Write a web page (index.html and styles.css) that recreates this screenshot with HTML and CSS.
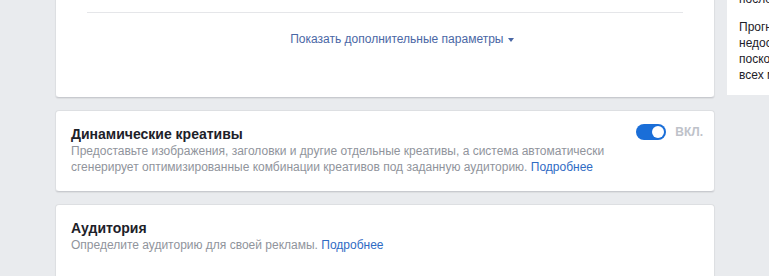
FILE: index.html
```html
<!DOCTYPE html>
<html lang="ru">

<head>
    <meta charset="utf-8">
    <meta name="viewport" content="width=device-width, initial-scale=1.0">
    <title>Настройки рекламы</title>
    <link rel="stylesheet" href="styles.css">
</head>

<body>
    <div class="page">
        <div class="main">
            <!-- блок с дополнительными параметрами -->
            <div class="card card-more">
                <div class="divider"></div>
                <a class="more-link" href="#">Показать дополнительные параметры <span class="caret"></span></a>
            </div>

            <div class="card">
                <div class="card-head">
                    <h2 class="card-title">Динамические креативы</h2>
                    <div class="switch-wrap">
                        <span class="switch"><span class="knob"></span></span>
                        <span class="switch-label">ВКЛ.</span>
                    </div>
                </div>
                <p class="card-text">Предоставьте изображения, заголовки и другие отдельные креативы, а система автоматически
                    сгенерирует оптимизированные комбинации креативов под заданную аудиторию. <a href="#">Подробнее</a></p>
            </div>

            <div class="card card-last">
                <h2 class="card-title">Аудитория</h2>
                <p class="card-text">Определите аудиторию для своей рекламы. <a href="#">Подробнее</a></p>
            </div>
        </div>

        <div class="side">
            <p>последних 7 дней.</p>
            <p>Прогнозы<br>недоступны,<br>поскольку для<br>всех мест размещения.</p>
        </div>
    </div>
</body>

</html>
```

FILE: styles.css
```css
/* фон страницы */
body {
    margin: 0;
    background-color: #e9ebee;
    font-family: "Liberation Sans", Arial, sans-serif;
    color: #1d2129;
    overflow: hidden;
}

.page {
    display: flex;
    align-items: flex-start;
    gap: 12px;
    padding-left: 55px;
    margin-top: -13px;
}

.main {
    width: 660px;
    flex-shrink: 0;
    display: flex;
    flex-direction: column;
    gap: 12px;
}

/* карточки */
.card {
    background: #fff;
    border: 1px solid #dddfe2;
    border-bottom-color: #c8cacf;
    border-radius: 4px;
    box-shadow: 0 1px 1px rgba(0, 0, 0, 0.06);
    padding: 14px 11px 16px 15px;
}

.card-more {
    padding: 24px 31px 50px 31px;
    text-align: center;
}

.divider {
    height: 1px;
    background: #e5e6e9;
    margin-bottom: 16px;
}

.more-link {
    display: inline-block;
    margin-left: 34px;
    color: #4a67a5;
    font-size: 12px;
    line-height: 16px;
    text-decoration: none;
}

.caret {
    display: inline-block;
    width: 0;
    height: 0;
    border-left: 3.5px solid transparent;
    border-right: 3.5px solid transparent;
    border-top: 4px solid #4a67a5;
    vertical-align: middle;
    margin-left: 1px;
}

.card-head {
    display: flex;
    justify-content: space-between;
    align-items: center;
}

.card-title {
    margin: 0;
    font-size: 14px;
    line-height: 18px;
    font-weight: bold;
    color: #1d2129;
}

.card-text {
    margin: 0;
    max-width: 550px;
    font-size: 12px;
    line-height: 16px;
    color: #90949c;
}

.card-text a {
    color: #2f6bc4;
    text-decoration: none;
}

.card-last {
    padding-top: 14px;
    height: 60px;
}

/* переключатель */
.switch-wrap {
    display: flex;
    align-items: center;
    gap: 9px;
    margin-top: -4px;
}

.switch {
    position: relative;
    display: block;
    width: 30px;
    height: 16px;
    border-radius: 8px;
    background: #1a6ed8;
}

.knob {
    position: absolute;
    top: 2px;
    right: 2px;
    width: 12px;
    height: 12px;
    border-radius: 50%;
    background: #fff;
}

.switch-label {
    font-size: 12px;
    font-weight: bold;
    color: #bec2c9;
}

/* правая колонка */
.side {
    background: #fff;
    width: 240px;
    flex-shrink: 0;
    padding: 4px 12px 12px;
    box-sizing: border-box;
    font-size: 12px;
    line-height: 16px;
}

.side p {
    margin: 0 0 12px;
}

.side p:last-child {
    margin-bottom: 0;
}
```
